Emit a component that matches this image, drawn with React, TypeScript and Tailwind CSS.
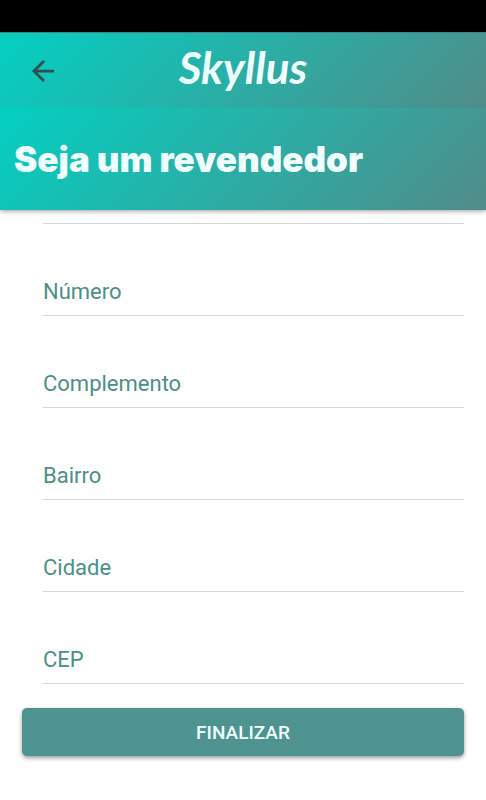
import { useState } from 'react';

const FIELDS = [
  { id: 'numero', label: 'Número' },
  { id: 'complemento', label: 'Complemento' },
  { id: 'bairro', label: 'Bairro' },
  { id: 'cidade', label: 'Cidade' },
  { id: 'cep', label: 'CEP' },
];

function BackButton() {
  return (
    <button
      type="button"
      aria-label="Voltar"
      className="flex h-12 w-12 items-center justify-center text-[#2f4f4c]"
    >
      <svg viewBox="4 4 16 16" className="h-[22px] w-[22px]" fill="currentColor" aria-hidden>
        <path d="M20 11H7.83l5.59-5.59L12 4l-8 8 8 8 1.41-1.41L7.83 13H20v-2z" />
      </svg>
    </button>
  );
}

function Header() {
  return (
    <header className="relative shadow-[0_1px_5px_rgba(0,0,0,0.4)]">
      <div className="grid h-[76px] grid-cols-[1fr_auto_1fr] items-center border-t border-[#3d8580] bg-[linear-gradient(135deg,#03d0c2,#518c89)] px-[19px]">
        <BackButton />
        <span className="pb-2 font-['Lato',sans-serif] text-[44px] leading-none font-bold text-[#effffd] italic">
          Skyllus
        </span>
      </div>
      <div className="flex h-[102px] items-center bg-[linear-gradient(135deg,#03d0c2,#518c89)] px-3.5">
        <h1 className="font-['Inter',sans-serif] text-[35px] leading-none font-black text-[#effffd]">
          Seja um revendedor
        </h1>
      </div>
    </header>
  );
}

function Field({ id, label }: { id: string; label: string }) {
  const [value, setValue] = useState('');

  return (
    <div className="ml-[21px] flex h-[92px] items-end border-b border-[#d3d6d6] pb-[9px]">
      <label htmlFor={id} className="pr-3 text-[22px] leading-7 text-[#4b9086]">
        {label}
      </label>
      <input
        id={id}
        value={value}
        onChange={(e) => setValue(e.target.value)}
        className="min-w-0 flex-1 text-[22px] leading-7 text-gray-800 outline-none"
      />
    </div>
  );
}

export default function App() {
  return (
    <div className="min-h-screen bg-white font-['Roboto',sans-serif]">
      <div className="h-8 bg-black" />
      <Header />
      <form className="flex flex-col px-[22px] pb-11" onSubmit={(e) => e.preventDefault()}>
        {/* street field, mostly scrolled under the header */}
        <input
          aria-label="Rua"
          className="ml-[21px] h-3.5 border-b border-[#d3d6d6] outline-none"
        />
        {FIELDS.map((field) => (
          <Field key={field.id} id={field.id} label={field.label} />
        ))}
        <button
          type="submit"
          className="mt-6 h-12 rounded-[5px] bg-[#4f9390] text-[19px] leading-none font-medium text-[#effffd] uppercase shadow-[0_2px_4px_rgba(0,0,0,0.4)]"
        >
          Finalizar
        </button>
      </form>
    </div>
  );
}
